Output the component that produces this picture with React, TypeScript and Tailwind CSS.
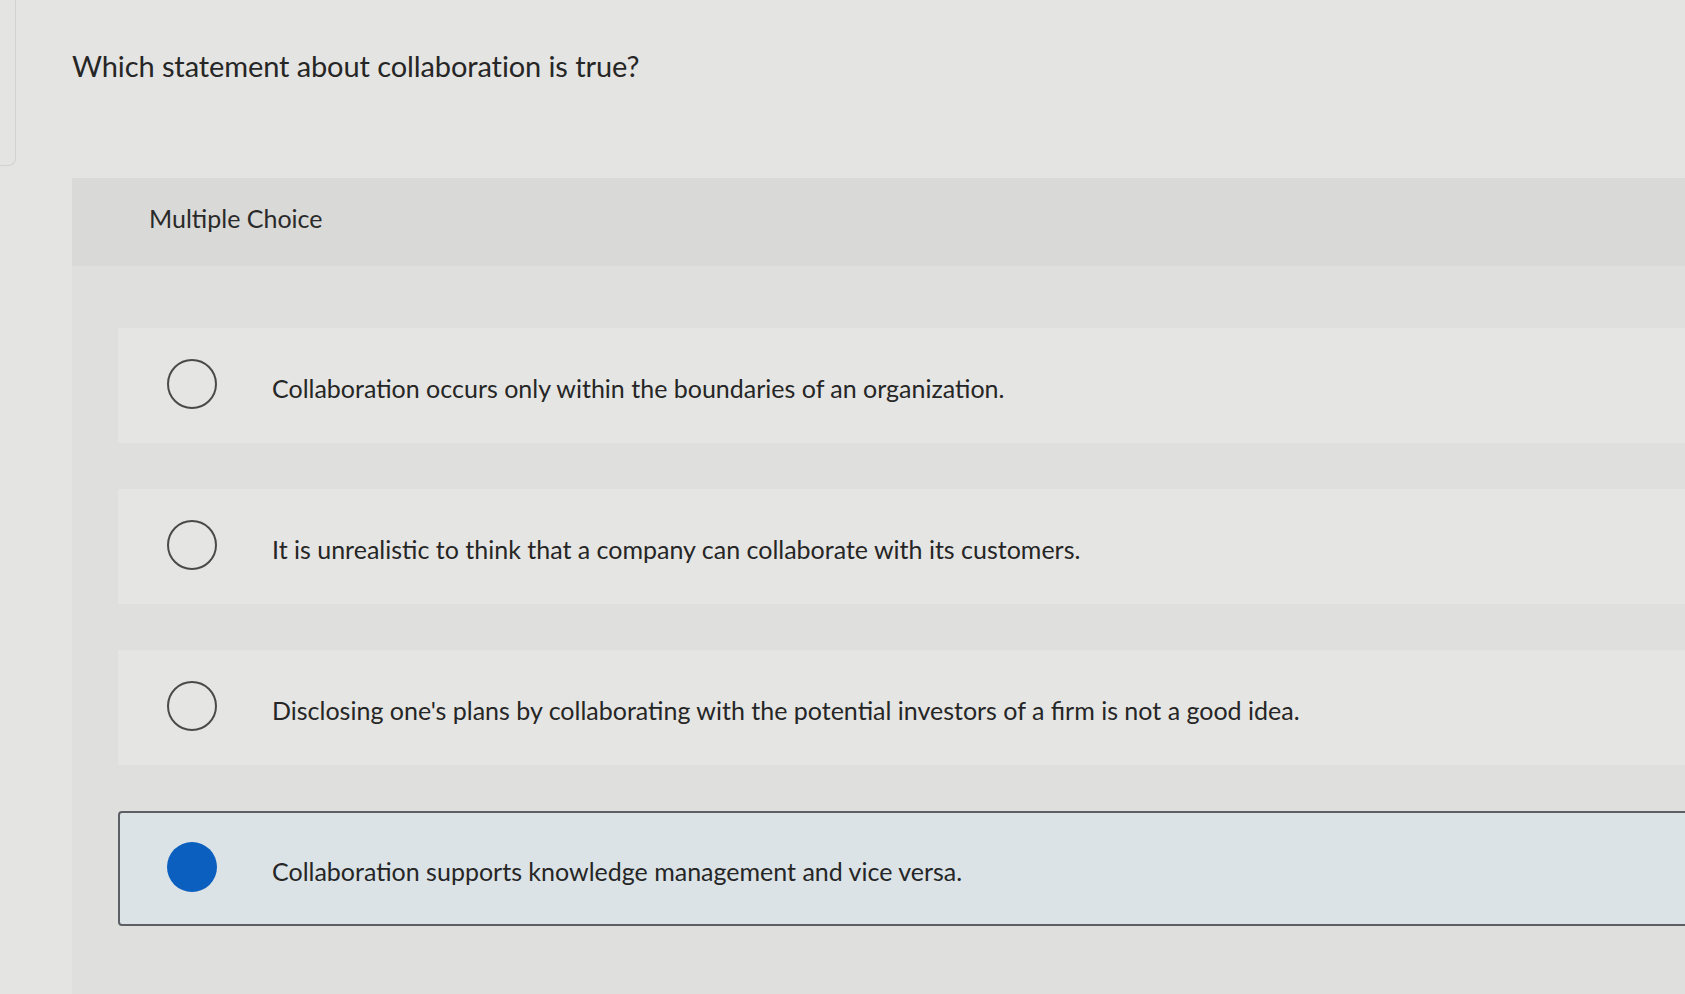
import React from "react";

const options = [
  { text: "Collaboration occurs only within the boundaries of an organization.", selected: false },
  { text: "It is unrealistic to think that a company can collaborate with its customers.", selected: false },
  { text: "Disclosing one's plans by collaborating with the potential investors of a firm is not a good idea.", selected: false },
  { text: "Collaboration supports knowledge management and vice versa.", selected: true },
];

export default function App() {
  return (
    <div
      className="w-[1685px] h-[994px] overflow-hidden bg-[#e4e4e2] text-[#262626]"
      style={{ fontFamily: "Lato, 'Open Sans', sans-serif" }}
    >
      <div className="flex">
        <div className="w-[16px] h-[166px] border-r border-b border-[#d2d2d0] rounded-br-[8px] shrink-0" />
        <div className="pl-[56px] pt-[46px] text-[29px] leading-[40px] tracking-[-0.1px]">
          Which statement about collaboration is true?
        </div>
      </div>

      <div className="ml-[72px] mt-[12px] w-[1700px] bg-[#dfdfdd] h-[900px]">
        <div className="h-[88px] flex items-center pl-[77px] pb-[7px] bg-[#d9d9d7] text-[25px] text-[#2a2a2a]">
          Multiple Choice
        </div>
        <div className="pl-[46px] pt-[62px] flex flex-col gap-[46px]">
          {options.map((o, i) => (
            <div
              key={i}
              className={
                o.selected
                  ? "h-[115px] flex items-center pl-[47px] pb-[4px] bg-[#dbe3e6] border-2 border-[#5c6064] rounded-[4px]"
                  : "h-[115px] flex items-center pl-[49px] pb-[4px] bg-[#e5e5e3]"
              }
            >
              {o.selected ? (
                <div className="w-[50px] h-[50px] rounded-full bg-[#0b5fbf] shrink-0" />
              ) : (
                <div className="w-[50px] h-[50px] rounded-full border-2 border-[#4a4a4a] shrink-0" />
              )}
              <div className="ml-[55px] mt-[8px] text-[25px] leading-[30px] text-[#262626]">{o.text}</div>
            </div>
          ))}
        </div>
      </div>
    </div>
  );
}
